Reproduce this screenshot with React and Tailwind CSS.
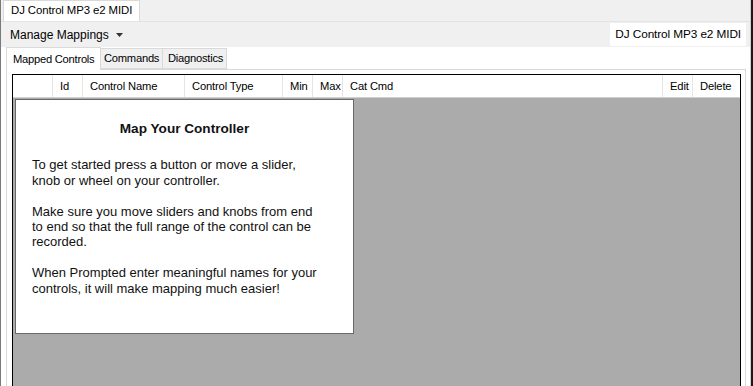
import React from "react";

const font = { fontFamily: '"Liberation Sans", Arial, sans-serif' };

function HeaderCell({ w, children, last }) {
  return (
    <div
      className={`h-full flex items-center pl-[7px] text-[11.2px] tracking-[-0.15px] text-black whitespace-nowrap ${last ? "" : "border-r border-[#e5e5e5]"} ${w}`}
    >
      {children}
    </div>
  );
}

export default function App() {
  return (
    <div className="w-[753px] h-[386px] bg-white flex overflow-hidden" style={font}>
      <div className="w-[1px] h-full bg-[#7a7a7a]" />
      <div className="flex-1 flex flex-col min-w-0">
        {/* Document tab strip */}
        <div className="h-[22px] bg-[#f0f0f0] flex items-end pl-[2px] border-b border-[#e3e3e3]">
          <div className="h-[21px] bg-white border border-b-0 border-[#d9d9d9] px-[7px] flex items-center text-[11.4px] tracking-[-0.1px] text-black whitespace-nowrap">
            DJ Control MP3 e2 MIDI
          </div>
        </div>
        {/* Toolbar */}
        <div className="h-[25px] bg-[#f0f0f0] flex items-center justify-between">
          <div className="pl-[9px] flex items-center gap-[7px] text-[12px] text-black">
            <span>Manage Mappings</span>
            <svg width="7" height="4" viewBox="0 0 7 4">
              <path d="M0 0 L7 0 L3.5 4 Z" fill="#333" />
            </svg>
          </div>
          <div className="h-[23px] bg-white flex items-center pl-[5px] pr-[5px] mr-[4px] text-[11.8px] tracking-[-0.1px] text-black whitespace-nowrap">
            DJ Control MP3 e2 MIDI
          </div>
        </div>
        {/* Tabs */}
        <div className="flex-1 flex flex-col bg-white pl-[5px] pr-[4px] min-h-0">
          <div className="h-[23px] flex items-end relative z-10">
            <div className="h-[23px] w-[95px] bg-white border border-b-0 border-[#d9d9d9] pl-[6px] flex items-center text-[11.2px] tracking-[-0.25px] text-black whitespace-nowrap">
              Mapped Controls
            </div>
            <div className="h-[21px] w-[62px] mb-[1px] bg-[#f0f0f0] border border-l-0 border-[#d9d9d9] pl-[3px] flex items-center text-[11.2px] tracking-[-0.25px] text-black whitespace-nowrap">
              Commands
            </div>
            <div className="h-[21px] w-[64px] mb-[1px] bg-[#f0f0f0] border border-l-0 border-[#d9d9d9] pl-[5px] flex items-center text-[11.2px] tracking-[-0.25px] text-black whitespace-nowrap">
              Diagnostics
            </div>
          </div>
          <div className="flex-1 -mt-[1px] border border-b-0 border-[#d9d9d9] bg-white pt-[4px] pl-[5px] pr-[4px] flex flex-col min-h-0">
            {/* Grid */}
            <div className="flex-1 border border-b-0 border-black flex flex-col min-h-0">
              <div className="h-[23px] bg-white flex border-b border-[#d0d0d0]">
                <HeaderCell w="w-[40px]"></HeaderCell>
                <HeaderCell w="w-[30px]">Id</HeaderCell>
                <HeaderCell w="w-[102px]">Control Name</HeaderCell>
                <HeaderCell w="w-[98px]">Control Type</HeaderCell>
                <HeaderCell w="w-[30px]">Min</HeaderCell>
                <HeaderCell w="w-[30px]">Max</HeaderCell>
                <HeaderCell w="w-[320px]">Cat Cmd</HeaderCell>
                <HeaderCell w="w-[30px]">Edit</HeaderCell>
                <HeaderCell w="flex-1" last>Delete</HeaderCell>
              </div>
              <div className="flex-1 bg-[#ababab] relative">
                <div className="absolute left-[2px] top-[1px] w-[339px] h-[235px] bg-white border border-[#696969] text-[13px] text-[#111] leading-[15.4px]">
                  <div className="text-center font-bold text-[13.6px] mt-[21px] mb-[21px]">
                    Map Your Controller
                  </div>
                  <div className="pl-[16px] whitespace-nowrap">
                    To get started press a button or move a slider,
                    <br />
                    knob or wheel on your controller.
                    <br />
                    <br />
                    Make sure you move sliders and knobs from end
                    <br />
                    to end so that the full range of the control can be
                    <br />
                    recorded.
                    <br />
                    <br />
                    When Prompted enter meaningful names for your
                    <br />
                    controls, it will make mapping much easier!
                  </div>
                </div>
              </div>
            </div>
          </div>
        </div>
      </div>
      <div className="w-[3px] h-full bg-[#1a1a1a] border-l border-[#d0d0d0]" />
    </div>
  );
}
